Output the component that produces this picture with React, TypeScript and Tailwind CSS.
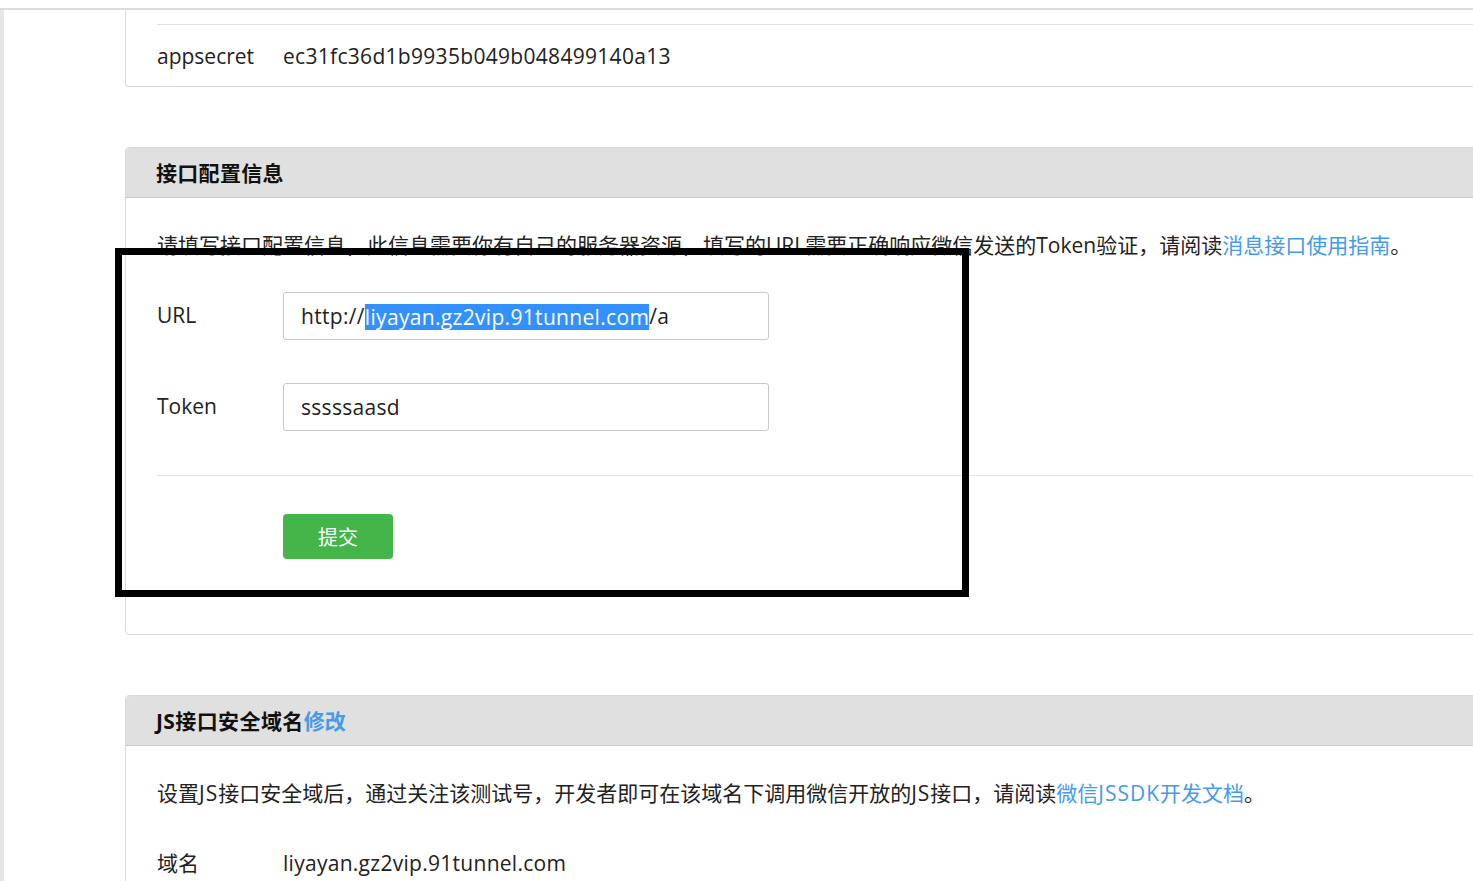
const font = "font-['Open_Sans','Noto_Sans_CJK_SC',sans-serif]";

function PanelHeader({ children }: { children: React.ReactNode }) {
  return (
    <div className="h-[50px] bg-[#e0e0e0] border-b border-[#cccccc] rounded-t-[4px] flex items-center pl-[30px] pt-[2px]">
      <h2 className="text-[21px] font-bold text-[#111]">{children}</h2>
    </div>
  );
}

export default function App() {
  return (
    <div className={`relative w-[1473px] h-[881px] overflow-hidden bg-white text-[#222] text-[21px] ${font}`}>
      <div className="h-[8px]" />
      <div className="h-[2px] bg-[#dcdcdc]" />
      <div className="flex h-full">
        <div className="w-[4px] shrink-0 bg-[#e7e7ea]" />
        <div className="ml-[121px] w-[1400px] shrink-0">
          {/* 测试号信息 */}
          <div className="border-l border-b border-[#d9d9d9] rounded-bl-[4px] pl-[31px] pt-[14px]">
            <div className="h-px bg-[#e5e5e5]" />
            <div className="h-[61px] flex items-center pt-[3px]">
              <span className="w-[126px]">appsecret</span>
              <span className="tracking-[0.3px]">ec31fc36d1b9935b049b048499140a13</span>
            </div>
          </div>

          {/* 接口配置信息 */}
          <div className="mt-[60px] border border-[#d9d9d9] rounded-[4px]">
            <PanelHeader>
              <span className="tracking-[0.3px]">接口配置信息</span>
            </PanelHeader>
            <div className="pl-[31px] pt-[32px] pb-[75px]">
              <p className="leading-[30px]">
                请填写接口配置信息，此信息需要你有自己的服务器资源，填写的URL需要正确响应微信发送的Token验证，请阅读
                <a className="text-[#459ae9]">消息接口使用指南</a>。
              </p>
              <div className="mt-[32px] flex items-center">
                <span className="w-[126px]">URL</span>
                <div className="w-[486px] h-[48px] border border-[#c8c8c8] rounded-[3px] flex items-center pl-[17px] pt-[2px] tracking-[0.32px]">
                  <span>http://</span>
                  <span className="inline-block leading-[26px] bg-[#3390ff] text-white">liyayan.gz2vip.91tunnel.com</span>
                  <span>/a</span>
                </div>
              </div>
              <div className="mt-[43px] flex items-center">
                <span className="w-[126px]">Token</span>
                <div className="w-[486px] h-[48px] border border-[#c8c8c8] rounded-[3px] flex items-center pl-[17px] pt-[2px] tracking-[0.3px]">
                  sssssaasd
                </div>
              </div>
              <div className="mt-[44px] h-px bg-[#e5e5e5]" />
              <div className="mt-[38px] pl-[126px]">
                <button className="w-[110px] h-[45px] rounded-[4px] bg-[#44b549] text-white text-[20px] pt-[3px]">提交</button>
              </div>
            </div>
          </div>

          {/* JS接口安全域名 */}
          <div className="mt-[60px] border border-[#d9d9d9] rounded-[4px]">
            <PanelHeader>
              <span className="tracking-[0.4px]">JS接口安全域名</span>
              <a className="text-[#459ae9]">修改</a>
            </PanelHeader>
            <div className="pl-[31px] pt-[32px] pb-[40px]">
              <p className="leading-[30px]">
                设置<span className="tracking-[1px]">JS</span>接口安全域后，通过关注该测试号，开发者即可在该域名下调用微信开放的<span className="tracking-[1px]">JS</span>接口，请阅读
                <a className="text-[#459ae9]">
                  微信<span className="tracking-[1px]">JSSDK</span>开发文档
                </a>。
              </p>
              <div className="mt-[40px] flex items-center leading-[30px]">
                <span className="w-[126px]">域名</span>
                <span className="tracking-[0.28px]">liyayan.gz2vip.91tunnel.com</span>
              </div>
            </div>
          </div>
        </div>
      </div>

      {/* 标注框 */}
      <div className="absolute left-[115px] top-[248px] w-[854px] h-[349px] border-[7px] border-black pointer-events-none" />
    </div>
  );
}
